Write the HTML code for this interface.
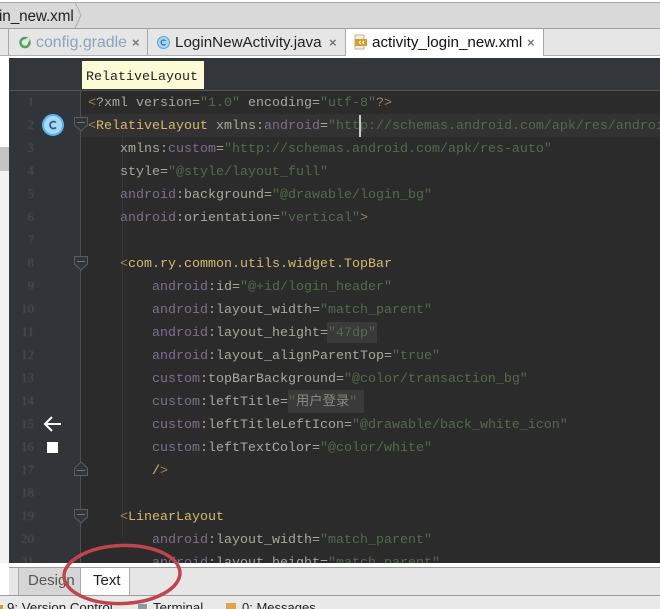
<!DOCTYPE html>
<html>
<head>
<meta charset="utf-8">
<style>
html,body{margin:0;padding:0;width:660px;height:609px;overflow:hidden;background:#fff}
#w{width:660px;height:609px;position:relative;overflow:hidden;background:#fff;font-family:"Liberation Sans","Noto Sans CJK SC",sans-serif}
.a{position:absolute}
.tab{position:absolute;font-size:15.2px;line-height:20px;white-space:nowrap}
.x{position:absolute;font-size:13px;font-weight:bold;color:#777;line-height:12px}
.l{position:absolute;white-space:pre;font:13.33px/18px "Liberation Mono","Noto Sans CJK SC",monospace;color:#a8a8a0;height:18px;filter:blur(.3px)}
.n{position:absolute;left:14px;width:20px;text-align:right;font:13px/18px "Liberation Serif",serif;color:#4e5355;filter:blur(.4px)}
.t{color:#d6b873}.b{color:#9c8560}.p{color:#7d6f8a}.s{color:#55694f}
</style>
</head>
<body>
<div id="w">
<!-- top breadcrumb -->
<div class="a" style="left:0;top:2px;width:660px;height:1px;background:#a8a8a8"></div>
<div class="a" style="left:0;top:3px;width:660px;height:25px;background:#d9d9d9"></div>
<div class="a" style="left:-1px;top:7px;font-size:15.3px;line-height:20px;color:#222;letter-spacing:-.1px">in_new.xml</div>
<svg class="a" style="left:73px;top:2px" width="12" height="27"><path d="M2 0 L8 13 L2 26" fill="none" stroke="#b0b0b0"/></svg>
<!-- tab bar -->
<div class="a" style="left:0;top:28px;width:660px;height:27px;background:#e6e6e6;border-top:1px solid #9e9e9e;box-sizing:border-box"></div>
<div class="a" style="left:8px;top:28px;width:1px;height:27px;background:#a8a8a8"></div>
<div class="a" style="left:147px;top:28px;width:1px;height:27px;background:#a8a8a8"></div>
<div class="a" style="left:345px;top:28px;width:1px;height:27px;background:#a8a8a8"></div>
<div class="a" style="left:346px;top:29px;width:197px;height:28px;background:#fff"></div>
<div class="a" style="left:543px;top:28px;width:1px;height:27px;background:#a8a8a8"></div>
<div class="a" style="left:0;top:55px;width:660px;height:1px;background:#b0b0b0"></div>
<div class="a" style="left:346px;top:55px;width:197px;height:3px;background:#fff"></div>
<svg class="a" style="left:18px;top:35px" width="15" height="15"><circle cx="7" cy="7.500" r="4.500" fill="none" stroke="#4fa35f" stroke-width="2.500"/><circle cx="9.500" cy="5" r="2" fill="#dfe7e5"/></svg>
<div class="tab" style="left:36px;top:33px;color:#8ba3bd;font-size:15.900px">config.gradle</div>
<div class="x" style="left:132px;top:37px">×</div>
<svg class="a" style="left:156px;top:35px" width="15" height="15"><circle cx="7.500" cy="7.500" r="6" fill="#a9d4f2" stroke="#5ba2d6"/><path d="M9.500 5.800 A2.500 2.500 0 1 0 9.500 9.200" fill="none" stroke="#2f6fa5" stroke-width="1.200"/></svg>
<div class="tab" style="left:175px;top:33px;color:#222">LoginNewActivity.java</div>
<div class="x" style="left:329px;top:37px">×</div>
<svg class="a" style="left:354px;top:34px" width="16" height="16"><rect x="1" y="1" width="9" height="14" fill="#f2efe2" stroke="#bdb48f"/><rect x="1" y="5" width="12" height="7" fill="#d99a32"/><path d="M5 8.500 L7 7 M5 8.500 L7 10 M10 7 L8.500 8.500 L10 10" stroke="#fff" fill="none"/></svg>
<div class="tab" style="left:372px;top:33px;color:#111">activity_login_new.xml</div>
<div class="x" style="left:527px;top:37px">×</div>

<!-- left side -->
<div class="a" style="left:0;top:147px;width:9px;height:24px;background:#c4c4c4"></div>
<div class="a" style="left:0;top:171px;width:9px;height:392px;background:#f2f2f2"></div>

<!-- editor -->
<div class="a" style="left:9px;top:58px;width:651px;height:505px;background:#2b2b2b"></div>
<div class="a" style="left:9px;top:58px;width:651px;height:32px;background:#33363a"></div>
<div class="a" style="left:9px;top:90px;width:651px;height:1px;background:#555"></div>
<div class="a" style="left:9px;top:91px;width:72px;height:472px;background:#313438"></div>
<div class="a" style="left:81px;top:114px;width:579px;height:23px;background:#323232"></div>
<div class="a" style="left:122px;top:137px;width:1px;height:400px;background:#383838"></div>
<div class="a" style="left:359px;top:115px;width:2px;height:22px;background:#c8c8c8"></div>

<!-- tooltip -->
<div class="a" style="left:82px;top:61px;width:122px;height:28px;background:#fbfbd6"></div>
<div class="a" style="left:86px;top:69px;font:13.33px/18px 'Liberation Mono',monospace;color:#222">RelativeLayout</div>

<!-- line numbers -->
<div class="n" style="top:93px">1</div>
<div class="n" style="top:116px">2</div>
<div class="n" style="top:139px">3</div>
<div class="n" style="top:162px">4</div>
<div class="n" style="top:185px">5</div>
<div class="n" style="top:208px">6</div>
<div class="n" style="top:231px">7</div>
<div class="n" style="top:254px">8</div>
<div class="n" style="top:277px">9</div>
<div class="n" style="top:300px">10</div>
<div class="n" style="top:323px">11</div>
<div class="n" style="top:346px">12</div>
<div class="n" style="top:369px">13</div>
<div class="n" style="top:392px">14</div>
<div class="n" style="top:415px">15</div>
<div class="n" style="top:438px">16</div>
<div class="n" style="top:461px">17</div>
<div class="n" style="top:484px">18</div>
<div class="n" style="top:507px">19</div>
<div class="n" style="top:530px">20</div>
<div class="n" style="top:553px;height:10px;overflow:hidden">21</div>

<!-- gutter icons -->
<svg class="a" style="left:42px;top:114px" width="22" height="22"><circle cx="11" cy="11" r="10" fill="#a6d8f7"/><circle cx="11" cy="11" r="10" fill="none" stroke="#5db0ea" stroke-width="2"/><path d="M14 8.500 A3.500 3.500 0 1 0 14 13.500" fill="none" stroke="#2c5f86" stroke-width="1.800"/></svg>
<svg class="a" style="left:42px;top:415px" width="22" height="18"><path d="M3 9 H19 M10 2 L3 9 L10 16" fill="none" stroke="#fff" stroke-width="2"/></svg>
<div class="a" style="left:47px;top:442px;width:11px;height:11px;background:#fff"></div>

<!-- fold markers -->
<div class="a" style="left:80px;top:91px;width:1px;height:472px;background:#4c4f51"></div>
<svg class="a" style="left:72px;top:115px" width="18" height="20"><path d="M2.500 2.500 H15.500 V10 L9 16 L2.500 10 Z" fill="#313438" stroke="#5b5e60"/><path d="M5 7.500 H13" stroke="#777"/></svg>
<svg class="a" style="left:72px;top:254px" width="18" height="20"><path d="M2.500 2.500 H15.500 V10 L9 16 L2.500 10 Z" fill="#313438" stroke="#5b5e60"/><path d="M5 7.500 H13" stroke="#777"/></svg>
<svg class="a" style="left:72px;top:460px" width="18" height="18"><path d="M2.500 15.500 H15.500 V8 L9 2 L2.500 8 Z" fill="#313438" stroke="#5b5e60"/><path d="M5 10.500 H13" stroke="#777"/></svg>
<svg class="a" style="left:72px;top:507px" width="18" height="20"><path d="M2.500 2.500 H15.500 V10 L9 16 L2.500 10 Z" fill="#313438" stroke="#5b5e60"/><path d="M5 7.500 H13" stroke="#777"/></svg>

<!-- code -->
<div class="l" style="left:88px;top:95px"><span class="b">&lt;</span>?xml version=<span class="s">"1.0"</span> encoding=<span class="s">"utf-8"</span><span class="b">?&gt;</span></div>
<div class="l" style="left:88px;top:118px"><span class="b">&lt;</span><span class="t">RelativeLayout</span> xmlns:<span class="p">android</span>=<span class="s">"http://schemas.android.com/apk/res/android"</span></div>
<div class="l" style="left:120px;top:141px">xmlns:<span class="p">custom</span>=<span class="s">"http://schemas.android.com/apk/res-auto"</span></div>
<div class="l" style="left:120px;top:164px">style=<span class="s">"@style/layout_full"</span></div>
<div class="l" style="left:120px;top:187px"><span class="p">android</span>:background=<span class="s">"@drawable/login_bg"</span></div>
<div class="l" style="left:120px;top:210px"><span class="p">android</span>:orientation=<span class="s">"vertical"</span><span class="b">&gt;</span></div>
<div class="l" style="left:120px;top:256px"><span class="b">&lt;</span><span class="t">com.ry.common.utils.widget.TopBar</span></div>
<div class="l" style="left:152px;top:279px"><span class="p">android</span>:id=<span class="s">"@+id/login_header"</span></div>
<div class="l" style="left:152px;top:302px"><span class="p">android</span>:layout_width=<span class="s">"match_parent"</span></div>
<div class="a" style="left:327px;top:322px;width:50px;height:21px;background:#3a3a3a"></div>
<div class="l" style="left:152px;top:325px"><span class="p">android</span>:layout_height=<span class="s">"47dp"</span></div>
<div class="l" style="left:152px;top:348px"><span class="p">android</span>:layout_alignParentTop=<span class="s">"true"</span></div>
<div class="l" style="left:152px;top:371px"><span class="p">custom</span>:topBarBackground=<span class="s">"@color/transaction_bg"</span></div>
<div class="a" style="left:288px;top:390px;width:76px;height:23px;background:#3a3a3a"></div>
<div class="l" style="left:152px;top:394px"><span class="p">custom</span>:leftTitle=<span class="s">"<span style="color:#85887f">用户登录</span>"</span></div>
<div class="l" style="left:152px;top:417px"><span class="p">custom</span>:leftTitleLeftIcon=<span class="s">"@drawable/back_white_icon"</span></div>
<div class="l" style="left:152px;top:440px"><span class="p">custom</span>:leftTextColor=<span class="s">"@color/white"</span></div>
<div class="l" style="left:152px;top:463px"><span class="t">/</span><span class="b">&gt;</span></div>
<div class="l" style="left:120px;top:509px"><span class="b">&lt;</span><span class="t">LinearLayout</span></div>
<div class="l" style="left:152px;top:532px"><span class="p">android</span>:layout_width=<span class="s">"match_parent"</span></div>
<div class="l" style="left:152px;top:555px;height:8px;overflow:hidden"><span class="p">android</span>:layout_height=<span class="s">"match_parent"</span></div>

<!-- bottom -->
<div class="a" style="left:0;top:563px;width:660px;height:4px;background:#fff"></div>
<div class="a" style="left:9px;top:567px;width:651px;height:1px;background:#9c9c9c"></div>
<div class="a" style="left:9px;top:568px;width:651px;height:27px;background:#e6e6e6"></div>
<div class="a" style="left:18px;top:568px;width:62px;height:27px;background:#d6d6d6;border-left:1px solid #aaa;box-sizing:border-box"></div>
<div class="a" style="left:80px;top:568px;width:50px;height:27px;background:#fff;border-left:1px solid #aaa;border-right:1px solid #aaa;box-sizing:border-box"></div>
<div class="a" style="left:28px;top:571px;font-size:15px;line-height:20px;color:#555">Design</div>
<div class="a" style="left:93px;top:571px;font-size:15px;line-height:20px;color:#222">Text</div>
<div class="a" style="left:0;top:595px;width:660px;height:1px;background:#9c9c9c"></div>
<div class="a" style="left:0;top:596px;width:660px;height:13px;background:#e9e9e9"></div>
<div class="a" style="left:0;top:605px;width:3px;height:4px;background:#d99a32"></div>
<div class="a" style="left:7px;top:599px;font-size:13.300px;line-height:18px;color:#222;white-space:nowrap">9: Version Control</div>
<div class="a" style="left:138px;top:604px;width:9px;height:5px;background:#8a9aa0"></div>
<div class="a" style="left:153px;top:599px;font-size:13.300px;line-height:18px;color:#222;white-space:nowrap">Terminal</div>
<div class="a" style="left:226px;top:603px;width:10px;height:6px;background:#e3a24b"></div>
<div class="a" style="left:242px;top:599px;font-size:13px;line-height:18px;color:#222;white-space:nowrap">0: Messages</div>

<!-- red ellipse annotation -->
<svg class="a" style="left:55px;top:535px" width="135" height="74"><ellipse cx="67" cy="39.500" rx="58" ry="29" transform="rotate(-2 67 39.500)" fill="none" stroke="#bf454d" stroke-width="3.500"/></svg>
</div>
</body>
</html>
